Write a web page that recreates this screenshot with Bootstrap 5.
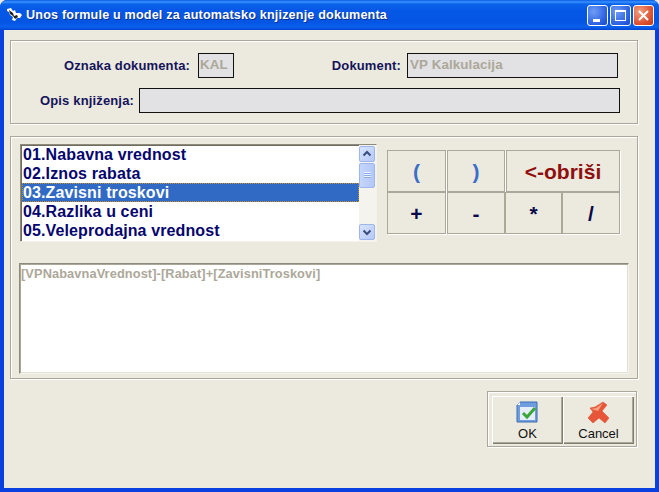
<!DOCTYPE html>
<html lang="sr"><head><meta charset="utf-8"><title>Unos formule</title>
<link href="https://cdn.jsdelivr.net/npm/bootstrap@5.3.0/dist/css/bootstrap.min.css" rel="stylesheet">
<style>
html,body{margin:0;background:#ece9df;font-family:"Liberation Sans",Arial,sans-serif}
.xpwin{width:659px;height:492px;background:#0a3fe0;border-radius:7px 7px 0 0;overflow:hidden}
.xptitle{height:30px;padding:0 5px;background:linear-gradient(180deg,#0a5ae6 0,#3a93ff 2px,#0a63ea 4px,#0558e6 10px,#0355e2 22px,#0a60ee 27px,#0344cf 30px);color:#fff;font-size:12.6px;font-weight:700;text-shadow:1px 1px 0 #0a2f90;letter-spacing:.18px}
.tapp{margin-left:1px;margin-right:3px}
.tbtn{width:21px;height:21px;border:1px solid #fff;border-radius:3px;background:radial-gradient(circle at 30% 30%,#6f9cf5,#2a5fe0 70%,#1a47c8);margin-left:2px}
.tbtn.tclose{background:radial-gradient(circle at 30% 30%,#f0a080,#dd5030 65%,#c23a18)}
.tbar{margin-right:0}
.xpbody{height:458px;margin:0 4px 4px;background:#ece9df;padding:10px 6px 0}
.grp{border:1px solid #aca899;box-shadow:inset 1px 1px 0 #fff,1px 1px 0 #fff}
.grp1{width:628px;height:84px;padding:12px 0 0}
.grp2{width:628px;height:243px;margin-top:12px;padding:7px 8px 0 9px}
.lbl{color:#14145a;font-size:13px;font-weight:700;letter-spacing:.15px;text-align:right;white-space:nowrap}
.fld{height:25px;border:1px solid #111;background:#e2e1e4;color:#aca899;font-size:13.4px;font-weight:700;line-height:21px;padding:0 1px;letter-spacing:.1px}
.lb1{width:179px}.f1{width:36px;margin-left:8px}.lb2{width:167px}.f2{width:211px;margin-left:6px}
.f2{padding-left:2px}
.row2gap{margin-top:10px}
.lb3{width:123px}.f3{width:481px;margin-left:5px}
.listbox{width:357px;height:98px;border:1px solid;border-color:#8d8a7c #f4f2ea #f4f2ea #8d8a7c;background:#fff;box-shadow:inset 1px 1px 0 #6f6c60}
.items{width:338px;padding:0 0 0 1px}
.item{height:19px;line-height:19px;font-size:16px;font-weight:700;color:#05056e;padding-left:1px;letter-spacing:.12px;white-space:nowrap}
.item.sel{background:#316ac5;color:#fff;outline:1px dotted #c8902a;outline-offset:-1px}
.sbar{width:17px;background:#f4f3ee;padding:1px 0}
.sbtn{width:16px;height:16px;background:linear-gradient(135deg,#d8e4fd,#b5c9f7);border:1px solid #9db6ee;border-radius:2px}
.sth{width:16px;height:25px;margin-top:1px;background:linear-gradient(90deg,#c5d5fb,#b3c8f6);border:1px solid #9db6ee;border-radius:2px}
.sth i{display:block;width:7px;height:1px;background:#eef3ff;box-shadow:0 1px 0 #8faae8;margin:1px auto}
.pad{margin-left:10px;padding-top:6px;width:234px}
.pbtn{height:42px;border:0;border-radius:0;padding:0;background:#ece9df;box-shadow:inset 1px 1px 0 #aca899,inset -1px -1px 0 #aca899,1px 1px 0 #fff;font-weight:700;color:#0a0a4a;font-size:21px;line-height:1}
.pbtn.pblue{color:#3a6ec8}.pbtn.pred{color:#8f0f0f}
.w58{width:58px}.w59{width:59px}.w57{width:57px}.w114{width:114px}
.gap1{margin-left:1px}
.fbox{width:610px;height:111px;margin:21px 0 0 -1px;background:#fff;border:1px solid;border-color:#8d8a7c #f4f2ea #f4f2ea #8d8a7c;box-shadow:inset 1px 1px 0 #aca899,inset -1px -1px 0 #e4e1d6;color:#aca899;font-size:12.8px;line-height:18px;font-weight:700;padding:1px 1px;letter-spacing:.1px}
.okwrap{width:150px;height:56px;margin:12px 0 0 477px;padding:4px 2px 4px 4px}
.okb{width:72px;height:48px;padding:0;border:0;border-radius:0;background:#ece9df;box-shadow:inset 1px 1px 0 #fff,inset -1px -1px 0 #7f7c70,inset -2px -2px 0 #aca899;font-size:13px;color:#111;line-height:1}
.okb svg{display:block;margin:0 auto 2px}
</style></head><body>
<div class="xpwin">
 <div class="xptitle d-flex align-items-center">
  <svg class="tapp" width="17" height="16" viewBox="0 0 17 16"><path d="M1 2l4-1 2 3 2-1 1 3 4 0 2 2-2 3-3 0-2 3-3-1 1-3-3-2-1-3-2-1z" fill="#fff"/><path d="M3 3l4 3 1 3 3-1 1 2-3 2-2-3-3-2z" fill="#222"/></svg>
  <span class="flex-grow-1">Unos formule u model za automatsko knjizenje dokumenta</span>
  <div class="d-flex tbar">
   <div class="tbtn d-flex align-items-end"><svg width="19" height="19" viewBox="0 0 19 19"><rect x="5" y="13" width="7" height="3" fill="#fff"/></svg></div>
   <div class="tbtn"><svg width="19" height="19" viewBox="0 0 19 19"><rect x="4.5" y="4.5" width="10" height="10" fill="none" stroke="#fff"/><rect x="4" y="4" width="11" height="2" fill="#fff"/></svg></div>
   <div class="tbtn tclose"><svg width="19" height="19" viewBox="0 0 19 19"><path d="M5 5l9 9M14 5l-9 9" stroke="#fff" stroke-width="2"/></svg></div>
  </div>
 </div>
 <div class="xpbody">
  <div class="grp grp1">
   <div class="d-flex align-items-center">
    <div class="lbl lb1">Oznaka dokumenta:</div><div class="fld f1">KAL</div>
    <div class="lbl lb2">Dokument:</div><div class="fld f2">VP Kalkulacija</div>
   </div>
   <div class="d-flex align-items-center row2gap">
    <div class="lbl lb3">Opis knjiženja:</div><div class="fld f3"></div>
   </div>
  </div>
  <div class="grp grp2">
   <div class="d-flex">
    <div class="listbox d-flex justify-content-between">
     <div class="items">
      <div class="item">01.Nabavna vrednost</div>
      <div class="item">02.Iznos rabata</div>
      <div class="item sel">03.Zavisni troskovi</div>
      <div class="item">04.Razlika u ceni</div>
      <div class="item">05.Veleprodajna vrednost</div>
     </div>
     <div class="sbar d-flex flex-column">
      <div class="sbtn"><svg class="d-block" width="14" height="14" viewBox="0 0 14 14"><path d="M3.5 8.5L7 5l3.5 3.5" fill="none" stroke="#3a4f80" stroke-width="2"/></svg></div>
      <div class="sth"><i class="mt-2"></i><i></i><i></i></div>
      <div class="flex-grow-1"></div>
      <div class="sbtn"><svg class="d-block" width="14" height="14" viewBox="0 0 14 14"><path d="M3.5 5.5L7 9l3.5-3.5" fill="none" stroke="#3a4f80" stroke-width="2"/></svg></div>
     </div>
    </div>
    <div class="pad">
     <div class="d-flex">
      <button class="btn pbtn pblue w59">(</button>
      <button class="btn pbtn pblue w58 gap1">)</button>
      <button class="btn pbtn pred w114 gap1">&lt;-obriši</button>
     </div>
     <div class="d-flex">
      <button class="btn pbtn w59">+</button>
      <button class="btn pbtn w58 gap1">-</button>
      <button class="btn pbtn w57">*</button>
      <button class="btn pbtn w58">/</button>
     </div>
    </div>
   </div>
   <div class="fbox">[VPNabavnaVrednost]-[Rabat]+[ZavisniTroskovi]</div>
  </div>
  <div class="grp okwrap d-flex">
   <button class="btn okb">
    <svg width="24" height="24" viewBox="0 0 24 24"><path d="M4 1h17v20H1V4z" fill="#6f9ee0" stroke="#3b6cb0"/><rect x="4" y="6" width="15" height="13" fill="#e4edf8"/><path d="M1 4l3-3v3z" fill="#fff"/><path d="M7 12l4 4 8-9" fill="none" stroke="#3aa63a" stroke-width="3"/></svg>OK</button>
   <button class="btn okb">
    <svg width="24" height="24" viewBox="0 0 24 24"><path d="M3 7l5-1 8-5 4 3-5 6 7 7-4 5-6-5-6 5-5-5 5-6z" fill="#e8563a" stroke="#d24a28" stroke-width=".5"/><path d="M4 8l5-1 7-5-5 8z" fill="#f6a07f"/></svg>Cancel</button>
  </div>
 </div>
</div>
</body></html>
